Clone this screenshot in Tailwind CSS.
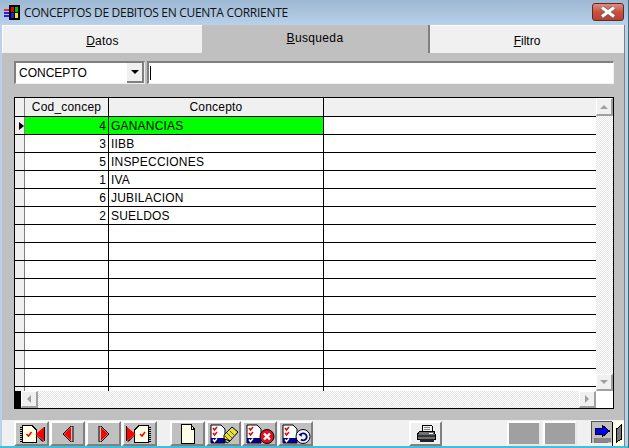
<!DOCTYPE html>
<html><head><meta charset="utf-8"><script src="https://cdn.jsdelivr.net/npm/@tailwindcss/browser@4"></script></head>
<body class="m-0">
<div class="w-[629px] h-[448px] overflow-hidden flex flex-col bg-[#b9d1ea] border-r border-r-[#3a6a7a] font-['Liberation_Sans',sans-serif] text-[12px] text-black">
  <!-- title bar -->
  <div class="h-[25px] shrink-0 flex items-center pl-[4px] pr-[4px] bg-gradient-to-b from-[#9db8d3] to-[#b9d1ea]">
    <svg width="17" height="17" viewBox="0 0 17 17" shape-rendering="crispEdges" class="shrink-0"><rect x="5" y="1" width="11" height="15" fill="#000"/><rect x="7" y="3" width="3" height="5" fill="#e00"/><rect x="11" y="3" width="3" height="5" fill="#0b0"/><rect x="7" y="9" width="3" height="5" fill="#22e"/><rect x="11" y="9" width="3" height="5" fill="#ee0"/><rect x="0" y="5" width="5" height="2" fill="#e22"/><rect x="0" y="8" width="5" height="2" fill="#22e"/><rect x="0" y="11" width="5" height="2" fill="#22e"/></svg>
    <span class="ml-[3px] font-['Open_Sans',sans-serif] text-[12px] tracking-[-0.3px] text-[#111]">CONCEPTOS DE DEBITOS EN CUENTA CORRIENTE</span>
    <div class="ml-auto w-[32px] h-[18px] -mt-[1px] rounded-[3px] border border-[#5b2b2b] bg-gradient-to-b from-[#dc8d80] via-[#c9503c] to-[#b8412f] flex items-center justify-center">
      <svg width="18" height="12" viewBox="0 0 18 12"><path d="M3 1.5 L15 10.5 M15 1.5 L3 10.5" stroke="#666" stroke-width="4.5"/><path d="M3 1.5 L15 10.5 M15 1.5 L3 10.5" stroke="#fff" stroke-width="3"/></svg>
    </div>
  </div>
  <!-- client -->
  <div class="flex-1 ml-[2px] mr-[3px] mb-[2px] flex flex-col bg-[#f0f0f0] border-r border-[#808080] relative">
    <div class="flex h-[28px] shrink-0 bg-[#f0f0f0]">
      <div class="w-[200px] border-t border-l border-white flex items-center justify-center pt-[2px] tracking-[0.25px]"><span><span class="underline">D</span>atos</span></div>
      <div class="w-[228px] bg-[#c0c0c0] border-r-2 border-[#808080] flex items-center justify-center pb-[3px] tracking-[0.35px]"><span><span class="underline">B</span>usqueda</span></div>
      <div class="flex-1 border-t border-white flex items-center justify-center pt-[2px]"><span><span class="underline">F</span>iltro</span></div>
    </div>
    <div class="h-[367px] shrink-0 bg-[#c0c0c0] pl-[12px] pr-[10px] pt-[8px] flex flex-col">
      <div class="flex h-[23px] shrink-0">
        <div class="w-[131px] bg-white border-t-2 border-l-2 border-[#808080] border-b border-r border-b-[#f0f0f0] border-r-[#f0f0f0] flex items-center pl-[3px] relative">
          <span class="-mt-[1px]">CONCEPTO</span>
          <div class="absolute right-0 top-0 w-[17px] h-[20px] bg-[#f0f0f0] border-r-2 border-b-2 border-[#808080] flex items-center justify-center"><div class="w-0 h-0 border-x-[4px] border-x-transparent border-t-[4px] border-t-black"></div></div>
        </div>
        <div class="ml-[2px] flex-1 bg-white border-t-2 border-l-2 border-[#808080] border-b border-r border-b-[#f0f0f0] border-r-[#f0f0f0] flex items-center pl-[1px]"><div class="w-px h-[14px] bg-black"></div></div>
      </div>
      <!-- grid -->
      <div class="mt-[13px] h-[312px] w-[600px] border border-black bg-white flex relative tracking-[0.2px]">
        <div class="w-[581px] flex flex-col">
          <div class="h-[293px] overflow-hidden flex flex-col">
            <div class="flex h-[19px] shrink-0 bg-[#f0f0f0] border-b border-black">
              <div class="w-[10px] border-r border-[#808080]"></div>
              <div class="w-[84px] border-r border-black text-center leading-[19px]">Cod_concep</div>
              <div class="w-[215px] border-r border-black text-center leading-[19px]">Concepto</div>
              <div class="flex-1"></div>
            </div>
            <div class="flex h-[18px] shrink-0 border-b border-black">
              <div class="w-[10px] bg-[#f0f0f0] border-r border-[#808080] flex items-center justify-start"><div class="w-0 h-0 ml-[4px] border-y-[4px] border-y-transparent border-l-[5px] border-l-black"></div></div>
              <div class="w-[84px] bg-[#00ff00] border-r border-black text-right pr-[2px] leading-[19px]">4</div>
              <div class="w-[215px] bg-[#00ff00] border-r border-black pl-[2px] leading-[19px]">GANANCIAS</div>
              <div class="flex-1"></div>
            </div>
            <div class="flex h-[18px] shrink-0 border-b border-black"><div class="w-[10px] bg-[#f0f0f0] border-r border-[#808080]"></div><div class="w-[84px] border-r border-black text-right pr-[2px] leading-[19px]">3</div><div class="w-[215px] border-r border-black pl-[2px] leading-[19px]">IIBB</div></div>
            <div class="flex h-[18px] shrink-0 border-b border-black"><div class="w-[10px] bg-[#f0f0f0] border-r border-[#808080]"></div><div class="w-[84px] border-r border-black text-right pr-[2px] leading-[19px]">5</div><div class="w-[215px] border-r border-black pl-[2px] leading-[19px]">INSPECCIONES</div></div>
            <div class="flex h-[18px] shrink-0 border-b border-black"><div class="w-[10px] bg-[#f0f0f0] border-r border-[#808080]"></div><div class="w-[84px] border-r border-black text-right pr-[2px] leading-[19px]">1</div><div class="w-[215px] border-r border-black pl-[2px] leading-[19px]">IVA</div></div>
            <div class="flex h-[18px] shrink-0 border-b border-black"><div class="w-[10px] bg-[#f0f0f0] border-r border-[#808080]"></div><div class="w-[84px] border-r border-black text-right pr-[2px] leading-[19px]">6</div><div class="w-[215px] border-r border-black pl-[2px] leading-[19px]">JUBILACION</div></div>
            <div class="flex h-[18px] shrink-0 border-b border-black"><div class="w-[10px] bg-[#f0f0f0] border-r border-[#808080]"></div><div class="w-[84px] border-r border-black text-right pr-[2px] leading-[19px]">2</div><div class="w-[215px] border-r border-black pl-[2px] leading-[19px]">SUELDOS</div></div>
            <div class="flex h-[18px] shrink-0 border-b border-black"><div class="w-[10px] bg-[#f0f0f0] border-r border-[#808080]"></div><div class="w-[84px] border-r border-black"></div><div class="w-[215px] border-r border-black"></div></div>
            <div class="flex h-[18px] shrink-0 border-b border-black"><div class="w-[10px] bg-[#f0f0f0] border-r border-[#808080]"></div><div class="w-[84px] border-r border-black"></div><div class="w-[215px] border-r border-black"></div></div>
            <div class="flex h-[18px] shrink-0 border-b border-black"><div class="w-[10px] bg-[#f0f0f0] border-r border-[#808080]"></div><div class="w-[84px] border-r border-black"></div><div class="w-[215px] border-r border-black"></div></div>
            <div class="flex h-[18px] shrink-0 border-b border-black"><div class="w-[10px] bg-[#f0f0f0] border-r border-[#808080]"></div><div class="w-[84px] border-r border-black"></div><div class="w-[215px] border-r border-black"></div></div>
            <div class="flex h-[18px] shrink-0 border-b border-black"><div class="w-[10px] bg-[#f0f0f0] border-r border-[#808080]"></div><div class="w-[84px] border-r border-black"></div><div class="w-[215px] border-r border-black"></div></div>
            <div class="flex h-[18px] shrink-0 border-b border-black"><div class="w-[10px] bg-[#f0f0f0] border-r border-[#808080]"></div><div class="w-[84px] border-r border-black"></div><div class="w-[215px] border-r border-black"></div></div>
            <div class="flex h-[18px] shrink-0 border-b border-black"><div class="w-[10px] bg-[#f0f0f0] border-r border-[#808080]"></div><div class="w-[84px] border-r border-black"></div><div class="w-[215px] border-r border-black"></div></div>
            <div class="flex h-[18px] shrink-0 border-b border-black"><div class="w-[10px] bg-[#f0f0f0] border-r border-[#808080]"></div><div class="w-[84px] border-r border-black"></div><div class="w-[215px] border-r border-black"></div></div>
            <div class="flex h-[18px] shrink-0 border-b border-black"><div class="w-[10px] bg-[#f0f0f0] border-r border-[#808080]"></div><div class="w-[84px] border-r border-black"></div><div class="w-[215px] border-r border-black"></div></div>
            <div class="flex h-[18px] shrink-0"><div class="w-[10px] bg-[#f0f0f0] border-r border-[#808080]"></div><div class="w-[84px] border-r border-black"></div><div class="w-[215px] border-r border-black"></div></div>
          </div>
          <!-- horizontal scrollbar -->
          <div class="h-[17px] shrink-0 flex bg-[repeating-conic-gradient(#e4e4e4_0_25%,#fff_0_50%)] bg-[length:2px_2px]">
            <div class="w-[6px] bg-black"></div>
            <div class="w-[17px] bg-[#f0f0f0] border-r-2 border-b-2 border-[#a0a0a0] border-t border-l border-t-white border-l-white flex items-center justify-center"><div class="w-0 h-0 border-y-[4px] border-y-transparent border-r-[4px] border-r-[#a0a0a0]"></div></div>
            <div class="flex-1"></div>
            <div class="w-[17px] bg-[#f0f0f0] border-r-2 border-b-2 border-[#a0a0a0] border-t border-l border-t-white border-l-white flex items-center justify-center"><div class="w-0 h-0 border-y-[4px] border-y-transparent border-l-[4px] border-l-[#a0a0a0]"></div></div>
          </div>
        </div>
        <!-- vertical scrollbar -->
        <div class="flex-1 flex flex-col">
          <div class="h-[18px] shrink-0 bg-[#f0f0f0] border-r-2 border-b-2 border-[#a0a0a0] border-t border-l border-t-white border-l-white flex items-center justify-center"><div class="w-0 h-0 border-x-[4px] border-x-transparent border-b-[4px] border-b-[#a0a0a0]"></div></div>
          <div class="h-[258px] shrink-0 bg-[repeating-conic-gradient(#e4e4e4_0_25%,#fff_0_50%)] bg-[length:2px_2px]"></div>
          <div class="h-[17px] shrink-0 bg-[#f0f0f0] border-r-2 border-b-2 border-[#a0a0a0] border-t border-l border-t-white border-l-white flex items-center justify-center"><div class="w-0 h-0 border-x-[4px] border-x-transparent border-t-[4px] border-t-[#a0a0a0]"></div></div>
        </div>
      </div>
    </div>
    <!-- toolbar -->
    <div class="flex-1 flex items-start pt-[1px] pl-[12px] bg-[#f0f0f0]">
      <div class="flex gap-px">
        <button class="w-[35px] h-[25px] bg-[#c0c0c0] border-t-2 border-l-2 border-white border-r-2 border-b-2 border-r-[#808080] border-b-[#808080] flex items-center justify-center"><svg width="29" height="18" viewBox="0 0 29 18" shape-rendering="crispEdges"><path d="M5.5 .5H15L19.5 5V17.5H5.5Z" fill="#ffffe6" stroke="#000"/><path d="M3 2H5M3 4H5M3 6H5M3 8H5M3 10H5M3 12H5M3 14H5M3 16H5" stroke="#000"/><path d="M9.5 9l2 2 3-4" fill="none" stroke="#e00" stroke-width="1.5" shape-rendering="auto"/><path d="M27 2V16L18.5 9Z" fill="#f00" shape-rendering="auto"/><path d="M27 2V16H28V1Z" fill="#000"/><path d="M18 9L27 16.5H25Z" fill="#000" shape-rendering="auto"/></svg></button>
        <button class="w-[35px] h-[25px] bg-[#c0c0c0] border-t-2 border-l-2 border-white border-r-2 border-b-2 border-r-[#808080] border-b-[#808080] flex items-center justify-center"><svg width="12" height="16" viewBox="0 0 12 16"><path d="M9 1V15L2 8Z" fill="#f00"/><path d="M9 0H11V16H9L1 8Z" fill="none" stroke="#000"/></svg></button>
        <button class="w-[35px] h-[25px] bg-[#c0c0c0] border-t-2 border-l-2 border-white border-r-2 border-b-2 border-r-[#808080] border-b-[#808080] flex items-center justify-center"><svg width="12" height="16" viewBox="0 0 12 16"><path d="M3 1V15L10 8Z" fill="#f00"/><path d="M3 0H1V16H3L11 8Z" fill="none" stroke="#000"/></svg></button>
        <button class="w-[35px] h-[25px] bg-[#c0c0c0] border-t-2 border-l-2 border-white border-r-2 border-b-2 border-r-[#808080] border-b-[#808080] flex items-center justify-center"><svg width="29" height="18" viewBox="0 0 29 18" shape-rendering="crispEdges"><path d="M23.5 .5H14L9.5 5V17.5H23.5Z" fill="#ffffe6" stroke="#000"/><path d="M24 2H26M24 4H26M24 6H26M24 8H26M24 10H26M24 12H26M24 14H26M24 16H26" stroke="#000"/><path d="M15 9l2 2 3-4" fill="none" stroke="#e00" stroke-width="1.5" shape-rendering="auto"/><path d="M2 2V16L10.5 9Z" fill="#f00" shape-rendering="auto"/><path d="M1 1H2V16H1Z" fill="#000"/><path d="M11 9L2 16.5H4Z" fill="#000" shape-rendering="auto"/></svg></button>
      </div>
      <div class="flex gap-px ml-[13px]">
        <button class="w-[35px] h-[25px] bg-[#c0c0c0] border-t-2 border-l-2 border-white border-r-2 border-b-2 border-r-[#808080] border-b-[#808080] flex items-center justify-center"><svg width="16" height="20" viewBox="0 0 16 20" shape-rendering="crispEdges"><path d="M1.5 .5H11L14.5 5V19.5H1.5Z" fill="#ffffe6" stroke="#000"/><path d="M11 1V5H15" fill="none" stroke="#000"/></svg></button>
        <button class="w-[35px] h-[25px] bg-[#c0c0c0] border-t-2 border-l-2 border-white border-r-2 border-b-2 border-r-[#808080] border-b-[#808080] flex items-center justify-center"><svg width="30" height="20" viewBox="0 0 30 20"><path d="M2 1H12L16 5V19H2Z" fill="#fff" stroke="#000"/><rect x="2" y="14" width="14" height="5" fill="#000080"/><path d="M4 4l1.5 2 2.5-3M4 9l1.5 2 2.5-3" fill="none" stroke="#e00" stroke-width="1.5"/><path d="M4 15.5l1.5 2 2.5-3" fill="none" stroke="#fff" stroke-width="1.5"/><path d="M15 11L23 3L29 8L21 17L15 15Z" fill="#e8e030" stroke="#000"/><path d="M18 9l5 5M21 7l5 5M15 11l6 6" stroke="#555"/><path d="M15 15l6 2-3 2z" fill="#eee" stroke="#000"/></svg></button>
        <button class="w-[35px] h-[25px] bg-[#c0c0c0] border-t-2 border-l-2 border-white border-r-2 border-b-2 border-r-[#808080] border-b-[#808080] flex items-center justify-center"><svg width="30" height="20" viewBox="0 0 30 20"><path d="M2 1H12L16 5V19H2Z" fill="#fff" stroke="#000"/><rect x="2" y="14" width="14" height="5" fill="#000080"/><path d="M4 4l1.5 2 2.5-3M4 9l1.5 2 2.5-3" fill="none" stroke="#e00" stroke-width="1.5"/><path d="M4 15.5l1.5 2 2.5-3" fill="none" stroke="#fff" stroke-width="1.5"/><circle cx="22" cy="12.5" r="7" fill="#e01020" stroke="#000"/><path d="M19 9.5l6 6M25 9.5l-6 6" stroke="#fff" stroke-width="2.4"/></svg></button>
        <button class="w-[35px] h-[25px] bg-[#c0c0c0] border-t-2 border-l-2 border-white border-r-2 border-b-2 border-r-[#808080] border-b-[#808080] flex items-center justify-center"><svg width="30" height="20" viewBox="0 0 30 20"><path d="M2 1H12L16 5V19H2Z" fill="#fff" stroke="#000"/><rect x="2" y="14" width="14" height="5" fill="#000080"/><path d="M4 4l1.5 2 2.5-3M4 9l1.5 2 2.5-3" fill="none" stroke="#e00" stroke-width="1.5"/><path d="M4 15.5l1.5 2 2.5-3" fill="none" stroke="#fff" stroke-width="1.5"/><circle cx="22" cy="12.5" r="7" fill="#f4f4f4" stroke="#000"/><path d="M19 11.5a3.5 3.5 0 1 1 1 4" fill="none" stroke="#000080" stroke-width="1.8"/><path d="M17.5 10l3.5-.5-.5 3.5z" fill="#000080"/></svg></button>
      </div>
      <button class="ml-[96px] w-[33px] h-[25px] bg-[#f0f0f0] border-t-2 border-l-2 border-white border-r-2 border-b-2 border-r-[#808080] border-b-[#808080] flex items-center justify-center"><svg width="20" height="17" viewBox="0 0 20 17" shape-rendering="crispEdges"><path d="M7 .5H16L17 6H6Z" fill="#eee" stroke="#000"/><path d="M8 2.5h6M8 4.5h6" stroke="#888"/><path d="M4 6H18L19.5 10V14H1V10Z" fill="#707070" stroke="#000"/><rect x="2" y="10" width="17" height="2" fill="#333"/><rect x="4" y="14" width="14" height="2.5" fill="#222"/><path d="M13 8h4" stroke="#fff"/></svg></button>
      <div class="flex gap-[2px] ml-[65px]">
        <div class="w-[34px] h-[25px] bg-[#a0a0a0] border-2 border-t-white border-l-white border-r-[#e8e8e8] border-b-[#e8e8e8]"></div>
        <div class="w-[34px] h-[25px] bg-[#a0a0a0] border-2 border-t-white border-l-white border-r-[#e8e8e8] border-b-[#e8e8e8]"></div>
      </div>
      <div class="ml-[14px] w-[33px] h-[25px] flex">
        <svg width="33" height="25" viewBox="0 0 33 25" shape-rendering="crispEdges"><rect x="0" y="0" width="21" height="22" fill="#c0c0c0"/><path d="M0 22V0H21" fill="none" stroke="#555" stroke-width="2"/><rect x="21" y="0" width="12" height="25" fill="#ffffe6"/><path d="M3 14V17H17V22H3" fill="#808080"/><rect x="5" y="17" width="15" height="4" fill="#888"/><path d="M4.5 7.5H11V4L18.5 10L11 16V13H4.5Z" fill="#0000ff" stroke="#000"/><path d="M30.5 4L25.5 8V21L30.5 18Z" fill="#777" stroke="#000"/><path d="M21 .5V25" stroke="#000"/></svg>
      </div>
    </div>
  </div>
  <div class="h-[2px] -mt-[2px] shrink-0 bg-[#3fbfdc]"></div>
</div>
</body></html>
